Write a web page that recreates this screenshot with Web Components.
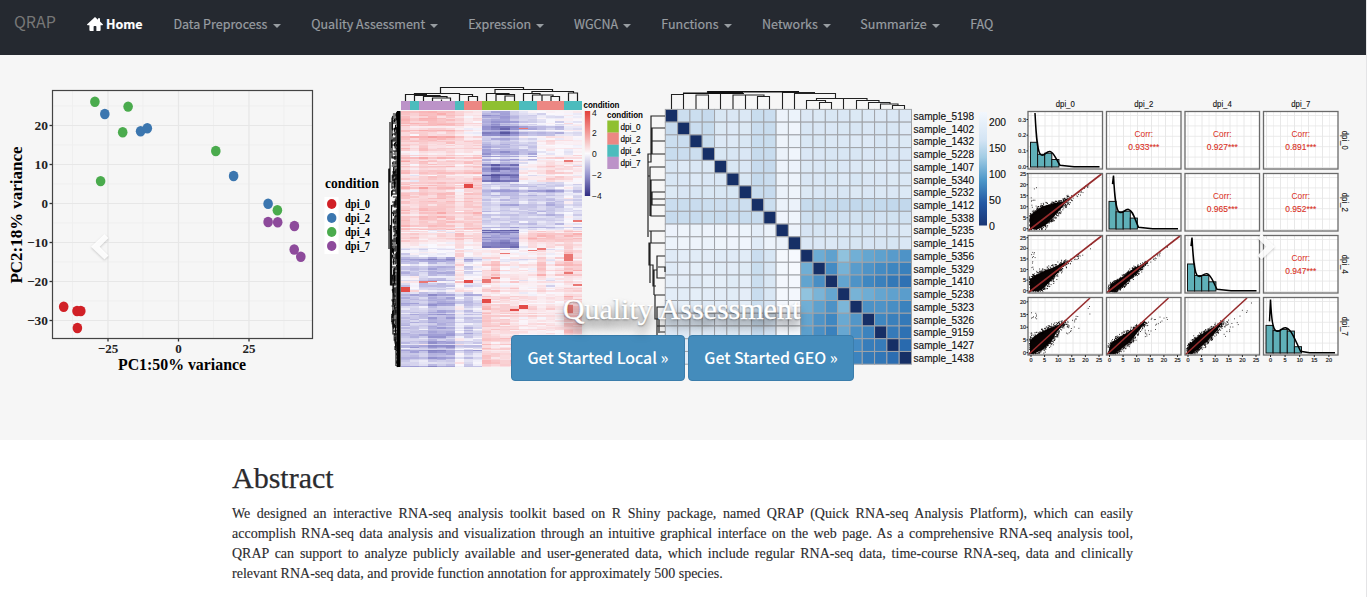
<!DOCTYPE html>
<html lang="en">
<head>
<meta charset="utf-8">
<title>QRAP</title>
<style>
html,body{margin:0;background:#fff}
body{font-family:"Liberation Serif",serif;color:#333;overflow:hidden}
</style>
</head>
<body>
<qrap-app></qrap-app>
<script>
const SANS = '"Noto Sans CJK SC","Source Sans Pro","Open Sans",sans-serif';
const define = (name, html, extra) => customElements.define(name, class extends HTMLElement {
  connectedCallback() {
    if (this.shadowRoot) return;
    const root = this.attachShadow({ mode: 'open' });
    root.innerHTML = html;
    if (extra) extra(this, root);
  }
});

/* ---------- svg helpers ---------- */
const rect = (x, y, w, h, fill, more = '') => `<rect x="${x}" y="${y}" width="${w}" height="${h}" fill="${fill}" ${more}/>`;
const line = (d, stroke = '#222', w = 1, more = '') => `<path d="${d}" fill="none" stroke="${stroke}" stroke-width="${w}" ${more}/>`;
const text = (x, y, s, size, len, more = '') => `<text x="${x}" y="${y}" font-size="${size}" ${len ? `textLength="${len}" lengthAdjust="spacingAndGlyphs"` : ''} ${more}>${s}</text>`;
function rng(seed) {
  return () => { seed |= 0; seed = seed + 0x6D2B79F5 | 0; let t = Math.imul(seed ^ seed >>> 15, 1 | seed); t = t + Math.imul(t ^ t >>> 7, 61 | t) ^ t; return ((t ^ t >>> 14) >>> 0) / 4294967296; };
}
const gauss = r => (r() + r() + r() + r() - 2) * 1.7;
const mix = (a, b, t) => 'rgb(' + a.map((v, i) => Math.round(v + (b[i] - v) * t)).join() + ')';
function ramp(stops, t) {
  t = Math.max(0, Math.min(1, t)) * (stops.length - 1);
  const i = Math.min(stops.length - 2, Math.floor(t));
  return mix(stops[i], stops[i + 1], t - i);
}
const chart = (x, w, font, draw) => `<style>:host{display:block;height:385px}svg{display:block;font-family:${font}}</style>
<svg width="${w}" height="385" viewBox="${x} 55 ${w} 385">${draw()}</svg>`;

/* ---------- PCA scatter ---------- */
define('pca-plot', chart(0, 388, "'Liberation Serif',serif", () => {
  let s = '';
  for (const x of [72.5, 143, 213.5, 284]) s += line(`M${x} 91V338`, '#efefef', 1);
  for (const y of [106, 145, 184, 223, 262, 301]) s += line(`M53 ${y}H312`, '#efefef', 1);
  for (const x of [108, 178.5, 249]) s += line(`M${x} 91V338`, '#e7e7e7', 1.2) + line(`M${x} 338.5v3`, '#333', 1.3);
  [20, 10, 0, -10, -20, -30].forEach((v, i) => {
    const y = 125.5 + 39 * i;
    s += line(`M53 ${y}H312`, '#e7e7e7', 1.2) + line(`M49.5 ${y}h3`, '#333', 1.3);
    s += text(48, y + 4, String(v).replace('-', '−'), 13, v < 0 ? 21 : v ? 13.5 : 0, 'text-anchor="end" font-weight="bold" fill="#222"');
  });
  s += `<rect x="52.5" y="90.5" width="260" height="248" fill="none" stroke="#444" stroke-width="1.2"/>`;
  [[108, '−25'], [178.5, '0'], [249, '25']].forEach(([x, v]) => s += text(x, 352.5, v, 13, 0, 'text-anchor="middle" font-weight="bold" fill="#222"'));
  s += text(118, 370, 'PC1:50% variance', 16, 128, 'font-weight="bold" fill="#000"');
  s += text(0, 0, 'PC2:18% variance', 16, 137, 'font-weight="bold" fill="#000" transform="translate(21.5 283.5) rotate(-90)"');
  const c = { r: '#d12026', b: '#3b76af', g: '#4aab4d', p: '#8d4a9b' };
  const pts = 'g94.9,101.7 g128.1,106.6 b104.8,114 g122.7,132.3 b140.6,131.2 b147.3,128.2 g215.8,151 g100.6,181.1 b233.6,176 b268.1,203.7 g277.4,210.2 p268.1,222 p277.7,222.3 p294.4,226 p294.2,249.5 p300.8,256.8 r63.7,306.8 r77,311 r80.8,311 r77.4,328';
  pts.split(' ').forEach(p => { const [x, y] = p.slice(1).split(','); s += `<ellipse cx="${x}" cy="${y}" rx="4.8" ry="5.2" fill="${c[p[0]]}"/>`; });
  s += text(325, 188, 'condition', 14, 54, 'font-weight="bold"');
  s += rect(324.5, 197, 14, 57, '#fff');
  ['r', 'b', 'g', 'p'].forEach((k, i) => {
    s += `<ellipse cx="331.7" cy="${204 + 14 * i}" rx="4.7" ry="5" fill="${c[k]}"/>`;
    s += text(345, 208.3 + 14 * i, 'dpi_' + [0, 2, 4, 7][i], 12, 25, 'font-weight="bold"');
  });
  return s;
}));

/* ---------- expression heat map ---------- */
define('expression-heatmap', chart(388, 258, "'Liberation Sans',sans-serif", () => {
  const r = rng(41), X = 400.7, W = 9.07;
  const col = { p: '#bc93c8', t: '#4cbcbd', k: '#ec8783', g: '#8fc031' };
  let s = '<g shape-rendering="crispEdges">';
  [...'ptpppptkkggggttkkktt'].forEach((k, i) => s += rect(X + W * i, 101, W + .1, 9.3, col[k]));
  const bands = [
    [140, [1.3,1.1,1.5,1.5,1.5,1.4,1,.4,.5,-1.6,-1.8,-1.8,-1.3,-.6,-.6,-.4,-.2,-.3,.1,0]],
    [163, [1.2,.9,1.2,1,1,1.1,.8,.9,1,-1.3,-.9,-1.3,-1.1,-.5,-.7,.2,.5,.4,.3,.3]],
    [181, [1.1,.5,1.2,1.1,1.2,1.1,.7,.9,1.1,-1.8,-2.6,-2.2,-2.2,.4,.3,.6,.8,.7,.6,.5]],
    [230, [1.3,.9,1.2,1.1,1.3,1.2,.6,1.2,1.1,-.9,-.8,-1,-1.1,-.8,-1,-.8,-1,-.8,-.2,-.6]],
    [247, [.8,1,.6,.5,.6,.5,1.2,.7,.8,-2,-2.1,-2.1,-2.1,.3,1.1,1,1.2,1,1.2,1]],
    [257, [-.6,-.2,-.4,-.2,-.3,-.4,.6,.1,.2,.1,.3,.1,-.2,0,0,.4,.1,.1,1,.3]],
    [275, [-1.2,-1.1,-1,-1.6,-1.4,-1.4,.5,-.8,-.3,.6,1.2,.1,.3,.2,.3,1.3,.2,.8,1.2,1.1]],
    [294, [-.5,-.1,-.9,-1,-1.1,-.7,.3,-.3,0,.7,.5,.2,.4,.2,.1,.5,-.1,.1,.6,.4]],
    [367, [-1.1,-1.1,-.9,-1.6,-1.4,-1.4,-.3,-.9,-.6,1.2,.8,.9,.8,.5,.6,.4,.6,.3,1.3,1.1]]];
  const stops = [[49,46,132],[156,154,212],[250,249,254],[249,172,173],[217,48,43]];
  for (let y = 111; y < 367;) {
    const h = Math.min(r() < .45 ? 1 : 2, 367 - y), b = bands.find(b => y < b[0])[1], shift = gauss(r) * .4;
    for (let i = 0; i < 20; i++) {
      const v = b[i] + shift * (b[i] < 0 ? 1 : .75) + gauss(r) * .25;
      s += rect((X + W * i).toFixed(2), y, W + .1, h, ramp(stops, v / 8 + .5));
    }
    y += h;
  }
  [[7,184,4],[0,287,5],[9,299,4],[13,305,4],[12,309,2],[7,280,3],[18,254,7],[18,272,2],[19,284,2],[2,281,2],[3,281,1],[10,277,2],[18,160,2],[15,248,2],[14,250,1],[11,253,1],[9,279,4],[19,220,2],[13,128,1],[18,305,8]]
    .forEach(([c, y, h], i) => s += rect(X + W * c, y, W, h, i < 6 ? '#e34b48' : '#ea7774'));
  s += '</g>';
  s += line('M440.5 93.5V87.5H523.5V89.500 M495 93V89.500H552.500V91.500 M414.500 95.500V93.500H459.500V95 M405.500 101V94.500H427 M414.500 101V95.500H440V97 M423.500 101V96.500 H447V98 M432.500 101V98H450.500V99.500 M441.500 101V99.500M450.500 101V99.500M459.500 101V94.500H472.500V96.500M468.500 101V96.500H477.500V101', '#1c1c1c', 1.2);
  s += line('M486.500 101V93.500H509V94.500M496 101V94.500H514.500V101M505 101V96H514.500M532 93V91.500H573.500V93M523.500 101V93.500H540V95M532.500 101V95H553V96.500M542 101V95M551 101V96.500H559.500V101M568.500 101V93H577.500V101', '#1c1c1c', 1.2);
  /* row dendrogram: dense comb against the map's left edge */
  let d = '';
  for (let y = 112; y < 367; y += 1) {
    const k = 3 + r() * 6 * Math.min(1, (368 - y) / 50);
    d += `M400.3 ${y}h${-k.toFixed(1)}`;
    if (r() < .4) d += `v${(1 + r() * 8 * Math.min(1, (367 - y) / 40)).toFixed(1)}`;
  }
  s += line(d, '#000', 1) + rect(397, 111, 3.4, 256, '#000');
  s += line('M397 118h-5v34h-2v17h-1v80M392 118v40h2M390 122v60h4M391.5 205v80h-1v-60M388.8 169v61h2M391 246v30h2v28h3M393 304v30h3v20h2M396 334v32', '#111', 1.2);
  s += text(583.5, 107.8, 'condition', 8.2, 36, 'font-weight="bold"');
  s += text(607, 117.6, 'condition', 8.2, 36, 'font-weight="bold"');
  s += '<defs><linearGradient id="g" x2="0" y2="1"><stop stop-color="#e2403b"/><stop offset=".25" stop-color="#f39a96"/><stop offset=".5" stop-color="#fbfafd"/><stop offset=".75" stop-color="#9896cf"/><stop offset="1" stop-color="#302c82"/></linearGradient></defs>';
  s += rect(584.8, 111, 5.4, 85, 'url(#g)');
  [['4', 116], ['2', 136], ['0', 156.7], ['−2', 177.7], ['−4', 198.5]].forEach(([v, y]) => s += text(592, y, v, 8.5, 0, 'fill="#111"'));
  ['g', 'k', 't', 'p'].forEach((k, i) => s += rect(607.3, 120.5 + 12.1 * i, 11.5, 12.2, col[k]) + text(620.5, 129.5 + 12.1 * i, 'dpi_' + [0, 2, 4, 7][i], 8.8, 20, 'stroke="#000" stroke-width=".15"'));
  return s;
}));

/* ---------- sample distance matrix ---------- */
define('distance-matrix', chart(646, 364, "'Liberation Sans',sans-serif", () => {
  const r = rng(7), X = 665.3, Y = 109.4, W = 12.31, H = 12.74;
  const names = [5198,1402,1432,5228,1407,5340,5232,1412,5338,5235,1415,5356,5329,1410,5238,5323,5326,9159,1427,1438];
  let s = '';
  const dark = [.1,.4,.62,0,.36,.55,.62,.7,.8];
  for (let j = 0; j < 20; j++) for (let i = 0; i < 20; i++) {
    const a = Math.min(i, j), b = Math.max(i, j);
    let f;
    if (i === j) f = '#162f66';
    else if (a >= 11) f = ramp([[150,198,223],[107,171,211],[62,134,192],[32,94,167]], (dark[a - 11] + dark[b - 11]) / 2 * 1.15 - .02 + r() * .06);
    else {
      let v = a === 9 || a === 10 || b === 9 || b === 10 ? .12 : .44;
      if (b < 9 && (a < 4 && b < 4 || a === 7 || b === 7 || b === 8)) v += .28;
      if (b >= 11 && (a === 7 || a === 8)) v += .16;
      if (j >= 11) v -= .12;
      if (j === 7 && i > 10 || j > 8 && i === 7) v += .2;
      if (a === 9 || a === 10) v += j > 8 ? .35 * (i > 10) : 0;
      f = ramp([[246,249,254],[216,230,244],[184,210,232]], v + r() * .1 - .03);
    }
    s += rect((X + W * i).toFixed(2), (Y + H * j).toFixed(2), W, H, f, 'stroke="#a0a3a8" stroke-width="1"');
  }
  names.forEach((n, j) => s += text(913.5, (Y + H * j + 10.4).toFixed(2), 'sample_' + n, 10.6, 60.5, 'fill="#111" stroke="#111" stroke-width=".15"'));
  s += line('M671.500 109V94.500H683M683.500 109V93.500H720M696 109V95H708.500V109M720.500 109V93.500H744M733 109V95H755M745.500 109V95H764V97M757.500 109V96.500H769.500V109M707.500 93V91.500H798.500V93M782.500 109V92.500H815M794.500 109V93.500H835.500V98M816.500 100.500V98.500H867V100M806.500 109V100.500H825.500V102.500M819.500 109V102.500H831.500V109M843.500 109V98.500M856.500 109V100.500H879V102.500M868.500 109V102.500H890V104M880.500 109V104H898V105.500M892.500 109V105.500H904.500V109', '#222', 1.1);
  s += line('M683 93.200h60M708 91.800h91', '#111', 1.4);
  s += line('M665 116h-14v46h-3v75M665 128h-13v26h13M665 141h-13 M665 167h-15v32h15M665 180h-14v36h14M665 192h-13v13h13M652 154h-4v22h2v40M651 231v12h-2v22h4v21h3M665 231h-16M665 243h-15v40M665 256h-8v22h8M658 267h7v5M657 270h-3v25M654 295h11M655 295v24h4v14M665 307h-8v19h8M657 326v10M660 332h5', '#222', 1.2);
  s += '<defs><linearGradient id="d" x2="0" y2="1"><stop stop-color="#f2f7fd"/><stop offset=".25" stop-color="#d3e4f4"/><stop offset=".4" stop-color="#a2cce4"/><stop offset=".6" stop-color="#4c97c9"/><stop offset=".8" stop-color="#2458a3"/><stop offset="1" stop-color="#193675"/></linearGradient></defs>';
  s += rect(979, 112, 8, 113.5, 'url(#d)');
  [[200, 126], [150, 152], [100, 177.600], [50, 203.700], [0, 229.500]].forEach(([v, y]) => s += text(989, y, v, 10.6, v > 99 ? 17 : 0, 'fill="#111" stroke="#111" stroke-width=".15"'));
  return s;
}));

/* ---------- pairs plot ---------- */
define('pairs-plot', chart(1010, 357, "'Liberation Sans',sans-serif", () => {
  const r = rng(99), xs = [1028, 1106.5, 1185, 1263.5], ys = [111.5, 173.5, 235.5, 297.5], w = 74.5, h = 57.5;
  const corr = { '01': '0.933', '02': '0.927', '03': '0.891', '12': '0.965', '13': '0.952', '23': '0.947' };
  const bars = [[.43,.22,.24,.13],[.48,.3,.31,.19],[.47,.27,.27,.16],[.48,.39,.41,.38,.11]];
  const clouds = {
    '10': [[2,55],[2,43],[7,38],[14,33],[25,30],[35,28],[41,24],[34,34],[24,45],[17,52],[9,56]],
    '20': [[2,56],[2,44],[9,39],[15,36],[25,32],[38,26],[32,35],[22,46],[13,55]],
    '30': [[2,56],[2,43],[10,36],[19,32],[26,29],[37,25],[29,34],[24,43],[15,52],[6,56]],
    '21': [[2,56],[4,49],[14,43],[27,33],[40,27],[30,38],[17,50],[9,56]],
    '31': [[2,56],[4,46],[14,39],[24,33],[39,24],[34,31],[24,44],[14,52],[7,56]],
    '32': [[2,56],[4,47],[13,39],[24,32],[37,25],[32,33],[23,43],[14,51],[7,56]]
  };
  let s = '';
  for (let j = 0; j < 4; j++) for (let i = 0; i < 4; i++) {
    const x = xs[i], y = ys[j];
    s += rect(x, y, w, h, '#fff');
    for (let k = 0; k < 10; k++) s += line(`M${x + 3 + k * 7} ${y}v${h}`, k % 2 ? '#efefef' : '#e2e2e2', .8);
    for (let k = 0; k < 6; k++) s += line(`M${x} ${y + 4 + k * 10.400}h${w}`, '#e6e6e6', .8);
    if (i > j) {
      s += text(x + w / 2, y + 25.500, 'Corr:', 8.4, 18.500, 'text-anchor="middle" fill="#d93025"');
      s += text(x + w / 2, y + 38.300, corr['' + j + i] + '***', 8.4, 31, 'text-anchor="middle" fill="#d93025" stroke="#d93025" stroke-width=".12"');
    } else if (i === j) {
      const b = y + h - 2;
      bars[i].forEach((v, k) => s += rect(x + 2.500 + k * 7.100, (b - v * h).toFixed(1), 7.100, (v * h).toFixed(1), '#5fb0b8', 'stroke="#111" stroke-width="1"'));
      const t = bars[i], P = (a, v) => `${(x + a).toFixed(1)} ${(b - v * h).toFixed(1)}`;
      const end = t.length > 4 ? 37 : 32;
      const start = i ? `M${P(6, i === 3 ? .55 : .78)}L${P(7, .93)}` : `M${P(7, .94)}`;
      s += line(`${start}C${P(8, .6)} ${P(9, t[1] + .02)} ${P(13, t[1] - .01)}S${P(18, t[2] + .04)} ${P(22, t[2] + .03)}S${P(28, t[3])} ${P(end, .03)}L${P(46, .005)}H${x + w - 3}`, '#000', 1.5);
    } else {
      const poly = clouds['' + j + i], spread = i === 0 ? 1.6 : j === 3 ? 1.4 : .9;
      let d = '';
      for (let k = 0; k < 420; k++) {
        const n = Math.floor(r() * poly.length), a = poly[n], b = poly[(n + 1) % poly.length], t = r();
        const px = a[0] + (b[0] - a[0]) * t + gauss(r) * spread, py = a[1] + (b[1] - a[1]) * t + gauss(r) * spread;
        if (px > 1 && px < w - 1 && py > 1 && py < h - 1) d += `M${(x + px).toFixed(1)} ${(y + py).toFixed(1)}h.9`;
      }
      for (let k = 0; k < 26; k++) {
        const u = 38 + r() * r() * 32, drop = j === 3 ? 8 : 3;
        d += `M${(x + u).toFixed(1)} ${(y + 57 - u * .77 + drop * (r() * 1.8 - .2)).toFixed(1)}h.8`;
      }
      if (i === 0) for (let k = 0; k < 12; k++) d += `M${(x + 2.500 + r() * 6).toFixed(1)} ${(y + 14 + r() * 26).toFixed(1)}h.8`;
      s += `<polygon points="${poly.map(p => `${x + p[0]},${y + p[1]}`).join(' ')}" fill="#080303"/>` + line(d, '#080303', .9);
      s += line(`M${x + .5} ${y + h - .5}L${x + (j === 3 ? 62 : 73.500)} ${y + .5}`, '#962b2c', 1.6);
    }
    s += `<rect x="${x}" y="${y}" width="${w}" height="${h}" fill="none" stroke="#6a6a6a" stroke-width="1.3"/>`;
  }
  const tick = (x, y, v, a) => text(x, y, v, 5.500, 0, `text-anchor="${a}" fill="#222" stroke="#222" stroke-width=".2"`);
  ['0.3', '0.2', '0.1', '0.0'].forEach((v, k) => s += tick(1026, 121.500 + 15.700 * k, v, 'end') + line(`M1026.5 ${119.500 + 15.700 * k}h1.500`));
  [25, 20, 15, 10, 5, 0].forEach((v, k) => s += tick(1026, 175.700 + 11 * k, v, 'end') + tick(1026, 239.700 + 10.600 * k, v, 'end') + line(`M1026.5 ${173.700 + 11 * k}h1.500M1026.5 ${237.700 + 10.600 * k}h1.500`));
  [20, 15, 10, 5, 0].forEach((v, k) => s += tick(1026, 303.800 + 12.700 * k, v, 'end') + line(`M1026.5 ${301.800 + 12.700 * k}h1.500`));
  xs.forEach((x, i) => {
    (i < 3 ? [0, 5, 10, 15, 20, 25] : [0, 5, 10, 15, 20]).forEach((v, k) => { const px = x + 3 + k * (i < 3 ? 13.600 : 14.600) + (i === 3 ? 4 : 0); s += tick(px, 362, v, 'middle') + line(`M${px} 355v2`); });
    const n = 'dpi_' + [0, 2, 4, 7][i];
    s += text(x + w / 2, 107.300, n, 8.4, 19, 'text-anchor="middle" fill="#111" stroke="#111" stroke-width=".12"');
    s += text(0, 0, n, 8.4, 19, `text-anchor="middle" fill="#111" stroke="#111" stroke-width=".12" transform="translate(1341.5 ${ys[i] + h / 2}) rotate(90)"`);
  });
  return s;
}));

/* ---------- navigation ---------- */
define('nav-item', `<style>
:host{display:flex;align-items:center;height:20px;margin-right:29.8px;color:#989da1;font:400 12.5px/20px ${SANS};-webkit-text-stroke:.2px;white-space:nowrap}
:host([active]){color:#fff;font-weight:700;margin-right:30.4px}
.caret{display:none;margin-left:5px;border:4px solid transparent;border-top-color:currentColor;border-bottom:0;margin-top:3px}
:host([menu]) .caret{display:block}
.lab{flex:none}
</style><slot name="icon"></slot><span class="lab"><slot></slot></span><span class="caret"></span>`,
(host, root) => { if (host.hasAttribute('w')) root.querySelector('.lab').style.width = host.getAttribute('w') + 'px'; });

define('home-icon', `<style>:host{display:block;width:16px;height:15px;margin-right:3px}svg{display:block}</style>
<svg width="16" height="15" viewBox="0 0 16 15"><path fill="#fff" d="M8 0 .2 7.300q-.5.8.5.9H2.400V13q0 1 1 1H6.600V9.800q0-.8.7-.8h1.400q.7 0 .7.8V14h3.200q1 0 1-1V8.200h1.700q1-.1.500-.9L13 4.500V1.300h-2v1.400Z"/></svg>`);

define('top-nav', `<style>
:host{display:flex;align-items:flex-start;height:55px;box-sizing:border-box;background:#252930;padding:0 14px}
.brand{width:73px;padding-top:11px;font:400 16px/20px ${SANS};color:#777}
nav{display:flex;padding-top:14px}
</style><div class="brand">QRAP</div><nav>
<nav-item active w="37"><home-icon slot="icon"></home-icon>Home</nav-item>
<nav-item menu w="95">Data Preprocess</nav-item>
<nav-item menu w="114.300">Quality Assessment</nav-item>
<nav-item menu w="63">Expression</nav-item>
<nav-item menu w="44.400">WGCNA</nav-item>
<nav-item menu w="58">Functions</nav-item>
<nav-item menu w="55.500">Networks</nav-item>
<nav-item menu w="67">Summarize</nav-item>
<nav-item>FAQ</nav-item></nav>`);

/* ---------- hero ---------- */
define('start-button', `<style>
:host{display:flex;align-items:center;justify-content:center;height:46px;box-sizing:border-box;background:#448cbc;border:1px solid #3b7dab;border-radius:4px;color:#fff;font:500 15.900px/24px ${SANS};white-space:nowrap}
</style><slot></slot>`);

define('carousel-arrow', `<style>
:host{display:block;width:20px;height:30px}svg{display:block;overflow:visible;filter:drop-shadow(0 1px 1px rgba(0,0,0,.2))}
:host([next]) svg{transform:scaleX(-1)}
</style><svg width="20" height="30" viewBox="0 0 20 30"><path d="M13.500 2 0 14.800 13.500 27.500l4-4L8.700 14.800 17.500 6Z" fill="#fff" fill-opacity=".9"/></svg>`);

define('hero-carousel', `<style>
:host{display:block;position:relative;height:385px;background:#f6f6f6}
.charts{display:grid;grid-template-columns:388px 258px 364px 357px}
.caption{position:absolute;left:511px;width:343px;top:236px;text-align:center}
h3{margin:0 0 9px;font:400 30px/35px "Liberation Serif",serif;color:#fff;-webkit-text-stroke:.4px #fff;text-shadow:0 1px 2px rgba(0,0,0,.45),0 8px 10px rgba(0,0,0,.65);transform:translateX(-1px)}
.buttons{display:flex;gap:3px}
.buttons>:first-child{width:174px}.buttons>:last-child{width:166px}
carousel-arrow{position:absolute;top:177px}
.prev{left:91px}.next{left:1255px}
</style>
<div class="charts"><pca-plot></pca-plot><expression-heatmap></expression-heatmap><distance-matrix></distance-matrix><pairs-plot></pairs-plot></div>
<carousel-arrow class="prev"></carousel-arrow><carousel-arrow class="next" next></carousel-arrow>
<div class="caption"><h3>Quality Assessment</h3><div class="buttons"><start-button>Get Started Local »</start-button><start-button>Get Started GEO »</start-button></div></div>`);

define('abstract-section', `<style>
:host{display:block;width:901px;margin:0 0 0 232px;padding-top:21px;color:#2b2b2e}
h2{margin:0 0 10px;font:400 30px/33px "Liberation Serif",serif;-webkit-text-stroke:.25px}
p{margin:0;font:14px/20px "Liberation Serif",serif;text-align:justify;-webkit-text-stroke:.12px}
</style><h2>Abstract</h2><p><slot></slot></p>`);

define('qrap-app', `<style>:host{display:block;height:597px;box-sizing:border-box;border-right:1px solid #e4e4e6}</style>
<top-nav></top-nav><hero-carousel></hero-carousel>
<abstract-section>We designed an interactive RNA-seq analysis toolkit based on R Shiny package, named QRAP (Quick RNA-seq Analysis Platform), which can easily accomplish RNA-seq data analysis and visualization through an intuitive graphical interface on the web page. As a comprehensive RNA-seq analysis tool, QRAP can support to analyze publicly available and user-generated data, which include regular RNA-seq data, time-course RNA-seq, data and clinically relevant RNA-seq data, and provide function annotation for approximately 500 species.</abstract-section>`);
</script>
</body>
</html>
